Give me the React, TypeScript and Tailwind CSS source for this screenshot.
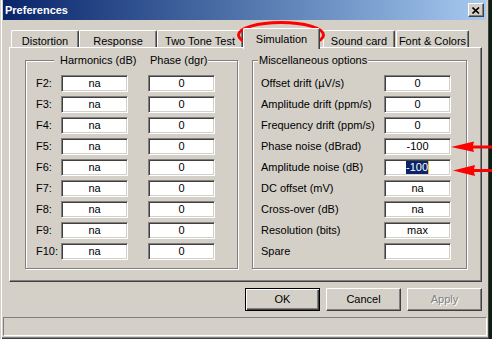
const tabs = [
  { name: 'Distortion', w: 'w-[68px]' },
  { name: 'Response', w: 'w-[78px]' },
  { name: 'Two Tone Test', w: 'w-[86px]' },
  { name: 'Simulation', w: 'w-[77px]', selected: true },
  { name: 'Sound card', w: 'w-[72px] ml-[3px]' },
  { name: 'Font & Colors', w: 'w-[73px] ml-[1px]' },
];

const harmonics = ['F2:', 'F3:', 'F4:', 'F5:', 'F6:', 'F7:', 'F8:', 'F9:', 'F10:'];

const misc = [
  { label: 'Offset drift (µV/s)', value: '0' },
  { label: 'Amplitude drift (ppm/s)', value: '0' },
  { label: 'Frequency drift (ppm/s)', value: '0' },
  { label: 'Phase noise (dBrad)', value: '-100' },
  { label: 'Amplitude noise (dB)', value: '-100', selected: true },
  { label: 'DC offset (mV)', value: 'na' },
  { label: 'Cross-over (dB)', value: 'na' },
  { label: 'Resolution (bits)', value: 'max' },
  { label: 'Spare', value: '' },
];

function Field({ value, selected }: { value: string; selected?: boolean }) {
  return (
    <div className="flex h-[17px] w-[67px] items-center justify-center border border-t-[#808080] border-l-[#808080] border-b-white border-r-white bg-white text-[11px] leading-[13px] text-black shadow-[inset_1px_1px_0_#404040,inset_-1px_-1px_0_#d4d0c8]">
      {selected ? (
        <span className="flex items-center">
          <span className="bg-[#0a246a] text-white">{value}</span>
          <span className="h-[13px] w-px bg-[#e8c040]" />
        </span>
      ) : (
        value
      )}
    </div>
  );
}

function Button({ label, primary, disabled }: { label: string; primary?: boolean; disabled?: boolean }) {
  return (
    <div
      className={
        primary
          ? 'flex h-[23px] w-[75px] items-center justify-center border border-black text-[11px] text-black shadow-[inset_1px_1px_0_#fff,inset_-1px_-1px_0_#404040,inset_-2px_-2px_0_#808080]'
          : 'flex h-[23px] w-[75px] items-center justify-center border border-t-white border-l-white border-b-[#404040] border-r-[#404040] text-[11px] shadow-[inset_-1px_-1px_0_#808080]'
      }
    >
      <span className={disabled ? 'text-[#808080] [text-shadow:1px_1px_0_#fff]' : 'text-black'}>{label}</span>
    </div>
  );
}

export default function App() {
  return (
    <div className="relative flex h-[339px] w-[492px] overflow-hidden bg-[#0e1f12] font-['Liberation_Sans',Arial,sans-serif] text-[11px] text-black">
      {/* dialog window */}
      <div className="flex h-[339px] w-[489px] flex-col bg-[#d4d0c8] shadow-[inset_1px_0_0_#d4d0c8,inset_2px_0_0_#fff,inset_-1px_0_0_#404040,inset_0_-1px_0_#404040,inset_0_-2px_0_#808080]">
        {/* title bar */}
        <div className="mx-[3px] flex h-[20px] items-center justify-between bg-gradient-to-r from-[#0a246a] to-[#a6caf0] pl-[2px] pr-[2px]">
          <span className="text-[11px] font-bold text-white">Preferences</span>
          <div className="flex h-[14px] w-[16px] items-center justify-center border border-t-white border-l-white border-b-[#404040] border-r-[#404040] bg-[#d4d0c8] shadow-[inset_-1px_-1px_0_#808080]">
            <svg width="8" height="7" viewBox="0 0 8 7">
              <path d="M0.5 0.5 L7 6.5 M7 0.5 L0.5 6.5" stroke="#000" strokeWidth="1.6" />
            </svg>
          </div>
        </div>

        <div className="flex flex-col pl-[9px] pr-[7px]">
          {/* tabs */}
          <div className="mt-[8px] flex items-end whitespace-nowrap pl-[2px]">
            {tabs.map((t) =>
              t.selected ? (
                <div
                  key={t.name}
                  className={`relative z-10 -mb-[2px] flex h-[21px] justify-center rounded-t-[2px] border-l border-t border-r border-l-white border-t-white border-r-[#404040] bg-[#d4d0c8] pt-[2px] shadow-[inset_-1px_0_0_#808080] ${t.w}`}
                >
                  {t.name}
                </div>
              ) : (
                <div
                  key={t.name}
                  className={`flex h-[17px] justify-center rounded-t-[2px] border-l border-t border-r border-l-white border-t-white border-r-[#404040] pt-[2px] shadow-[inset_-1px_0_0_#808080] ${t.w}`}
                >
                  {t.name}
                </div>
              ),
            )}
          </div>

          {/* tab panel */}
          <div className="flex h-[235px] w-[473px] gap-[14px] whitespace-nowrap border border-t-white border-l-white border-b-[#404040] border-r-[#404040] pl-[15px] pr-[14px] pt-[6px] pb-[12px] shadow-[inset_-1px_-1px_0_#808080]">
            <fieldset className="w-[213px] shrink-0 border border-[#808080] pl-[10px] pt-[8px] pb-[8px] shadow-[inset_1px_1px_0_#fff,1px_1px_0_#fff]">
              <legend className="ml-[18px] flex bg-[#d4d0c8] pl-[6px] pr-[2px] leading-[13px]">
                <span className="w-[90px]">Harmonics (dB)</span>
                <span className="w-[56px]">Phase (dgr)</span>
              </legend>
              <div className="flex flex-col gap-[4px]">
                {harmonics.map((h) => (
                  <div key={h} className="flex items-center">
                    <span className="w-[25px]">{h}</span>
                    <Field value="na" />
                    <div className="ml-[20px]">
                      <Field value="0" />
                    </div>
                  </div>
                ))}
              </div>
            </fieldset>

            <fieldset className="w-[215px] shrink-0 border border-[#808080] pl-[8px] pt-[8px] pb-[8px] shadow-[inset_1px_1px_0_#fff,1px_1px_0_#fff]">
              <legend className="-ml-[3px] bg-[#d4d0c8] px-[1px] leading-[13px]">Miscellaneous options</legend>
              <div className="flex flex-col gap-[4px]">
                {misc.map((m) => (
                  <div key={m.label} className="flex items-center">
                    <span className="w-[123px]">{m.label}</span>
                    <Field value={m.value} selected={m.selected} />
                  </div>
                ))}
              </div>
            </fieldset>
          </div>

          {/* buttons */}
          <div className="mt-[6px] flex justify-end gap-[6px]">
            <Button label="OK" primary />
            <Button label="Cancel" />
            <Button label="Apply" disabled />
          </div>
        </div>

        {/* status bar */}
        <div className="ml-[3px] mr-[2px] mt-[6px] h-[19px] border border-t-[#808080] border-l-[#808080] border-b-white border-r-white" />
      </div>

      {/* red annotations */}
      <svg className="absolute left-[235px] top-[19px]" width="92" height="32" viewBox="0 0 92 32">
        <ellipse cx="46" cy="16" rx="42.5" ry="12.5" fill="none" stroke="#ff0000" strokeWidth="3" />
      </svg>
      <svg className="absolute left-[448px] top-[138px]" width="44" height="42" viewBox="0 0 44 42">
        <polygon points="3,9 26,3.5 25,7.5 44,7.5 44,10.5 25,10.5 26,14" fill="#ff0000" />
        <polygon points="5,32.5 27,27 26,31 44,31 44,34 26,34 27,38" fill="#ff0000" />
      </svg>
    </div>
  );
}
